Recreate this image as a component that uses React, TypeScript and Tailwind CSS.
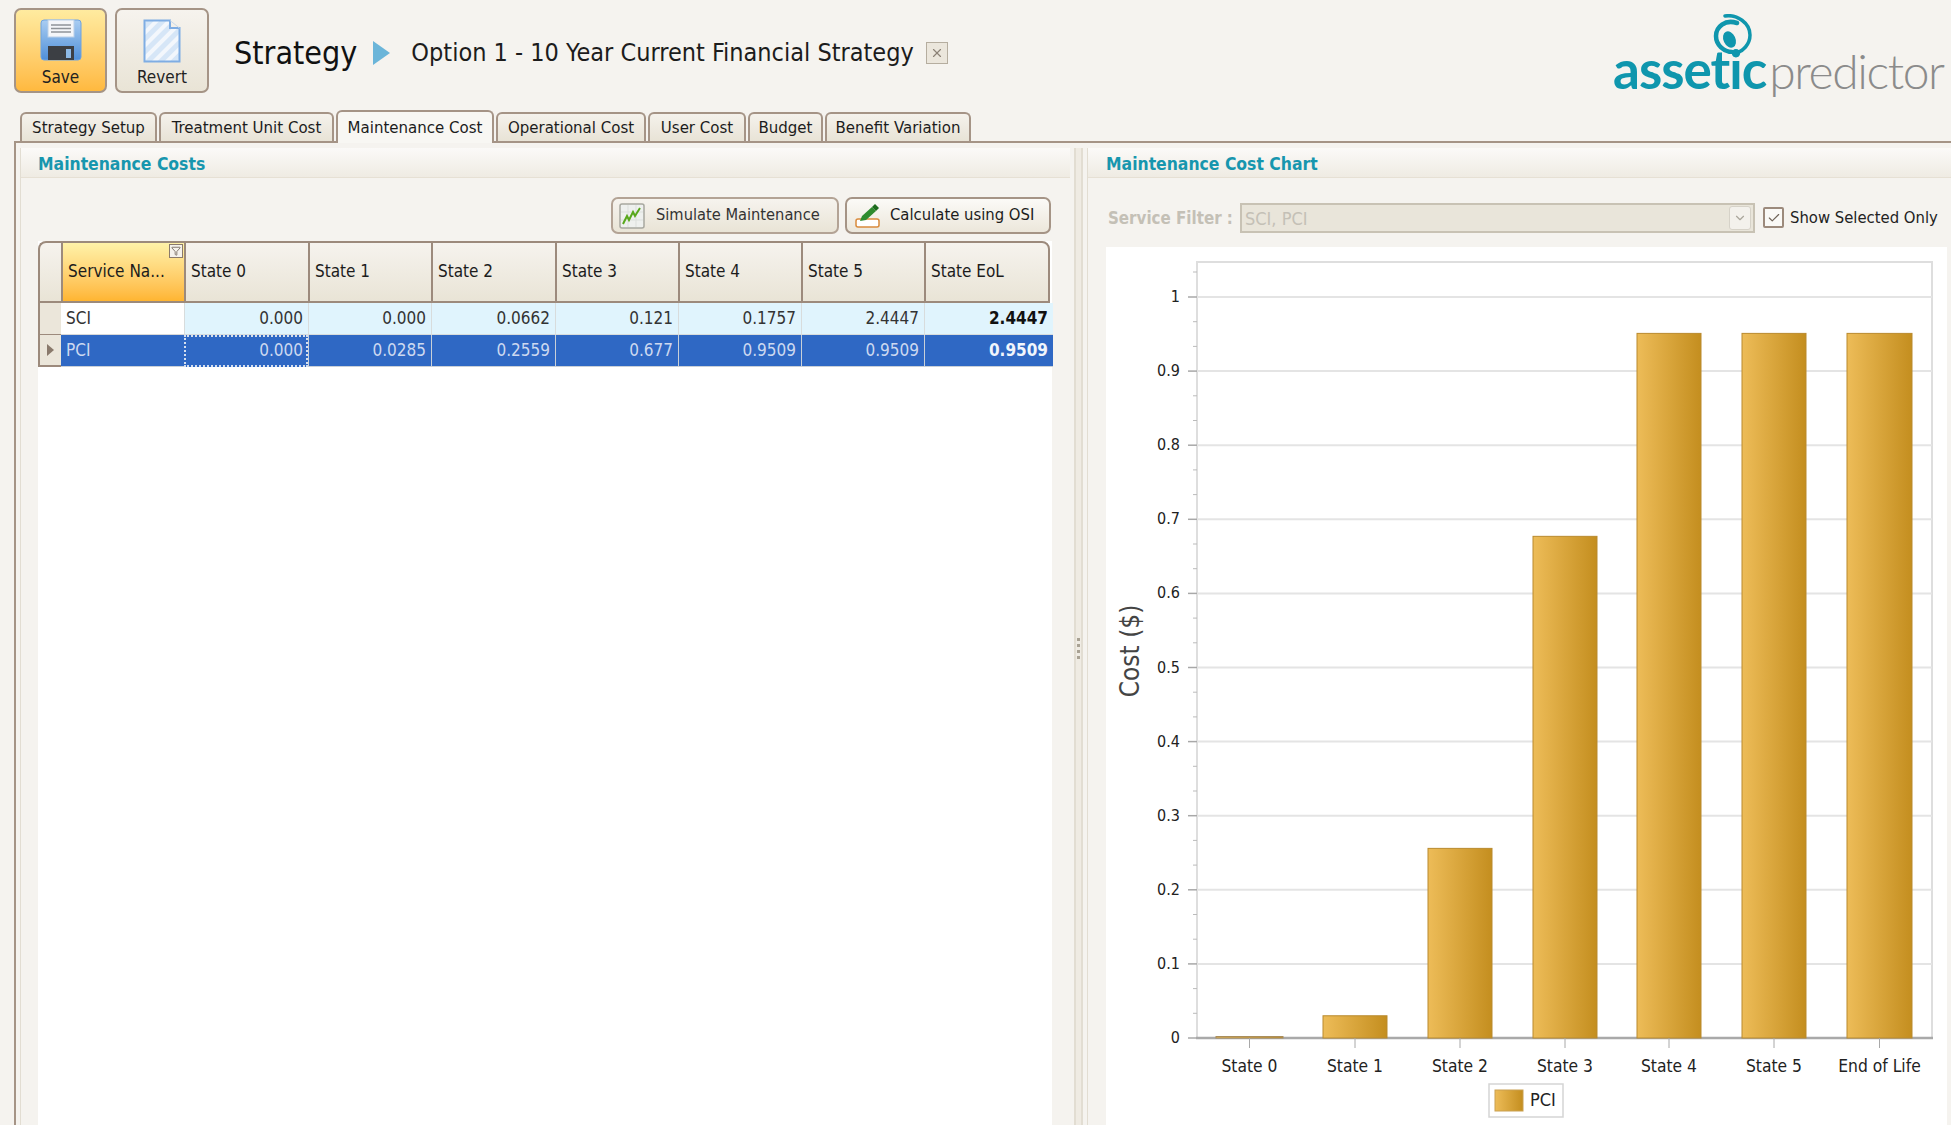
import React from "react";
import { ChevronDown, Check, X, Funnel } from "lucide-react";

const tabs = [
  { label: "Strategy Setup", width: "w-[137px]" },
  { label: "Treatment Unit Cost", width: "w-[175px]" },
  { label: "Maintenance Cost", width: "w-[158px]", active: true },
  { label: "Operational Cost", width: "w-[150px]" },
  { label: "User Cost", width: "w-[98px]" },
  { label: "Budget", width: "w-[75px]" },
  { label: "Benefit Variation", width: "w-[146px]" },
];

const columns = ["State 0", "State 1", "State 2", "State 3", "State 4", "State 5"];
const sci = ["0.000", "0.000", "0.0662", "0.121", "0.1757", "2.4447", "2.4447"];
const pci = ["0.000", "0.0285", "0.2559", "0.677", "0.9509", "0.9509", "0.9509"];

const bars = [
  { label: "State 0", x: 1216, w: 67, value: 0.002 },
  { label: "State 1", x: 1323, w: 64, value: 0.03 },
  { label: "State 2", x: 1428, w: 64, value: 0.2559 },
  { label: "State 3", x: 1533, w: 64, value: 0.677 },
  { label: "State 4", x: 1637, w: 64, value: 0.9509 },
  { label: "State 5", x: 1742, w: 64, value: 0.9509 },
  { label: "End of Life", x: 1847, w: 65, value: 0.9509 },
];

const yZero = 1038;
const yUnit = 741;
const yLabels = [0, 0.1, 0.2, 0.3, 0.4, 0.5, 0.6, 0.7, 0.8, 0.9, 1];

const SaveIcon = () => (
  <svg width="42" height="42" viewBox="0 0 42 42">
    <defs>
      <linearGradient id="disk" x1="0" y1="0" x2="0" y2="1">
        <stop offset="0" stopColor="#a9cdf2" />
        <stop offset="1" stopColor="#4f8fd8" />
      </linearGradient>
    </defs>
    <rect x="1" y="1" width="40" height="40" rx="3" fill="url(#disk)" stroke="#6fa3e0" />
    <rect x="8" y="1" width="26" height="17" fill="#f4f6f9" stroke="#b9cfe8" />
    <path d="M11 6h20M11 9.500h20M11 13h20" stroke="#8f9499" strokeWidth="1.500" />
    <rect x="8" y="27" width="26" height="14" fill="#3c3f44" />
    <rect x="26" y="30" width="5" height="9" fill="#8db9e6" />
  </svg>
);

const RevertIcon = () => (
  <svg width="38" height="44" viewBox="0 0 38 44">
    <defs>
      <pattern id="stripes" width="9" height="9" patternUnits="userSpaceOnUse" patternTransform="rotate(45)">
        <rect width="9" height="9" fill="#d6e6f7" />
        <rect width="4" height="9" fill="#f3f7fc" />
      </pattern>
    </defs>
    <path d="M1.500 1.500H27V9h9.500v33.500H1.500z" fill="url(#stripes)" stroke="#7fade3" strokeWidth="2" />
    <path d="M27 1.500L36.500 9" stroke="#c9d9ea" strokeWidth="1" />
  </svg>
);

const SimulateIcon = () => (
  <svg width="26" height="26" viewBox="0 0 26 26">
    <rect x="1" y="1" width="24" height="24" rx="2" fill="#eef0ee" stroke="#a8a8a0" strokeWidth="1.500" />
    <path d="M2 9h22M2 17h22M9 2v22M17 2v22" stroke="#dcdfdc" />
    <path d="M4 21l4-8 2 4 4-8 2 4 5-8" fill="none" stroke="#58a81c" strokeWidth="2" />
  </svg>
);

const CalculateIcon = () => (
  <svg width="26" height="24" viewBox="0 0 26 24">
    <rect x="1" y="15" width="23" height="8" rx="2" fill="#fff" stroke="#d98a3c" strokeWidth="1.500" />
    <path d="M5 17l2-5L17 3l4 4-10 9z" fill="#2e8b2e" />
    <path d="M17 3l3-3 4 4-3 3z" fill="#1d6b1d" />
  </svg>
);

const LogoSwirl = () => (
  <svg width="40" height="40" viewBox="0 0 40 40" fill="none" stroke="#0f96ad" strokeLinecap="round">
    <ellipse cx="16.500" cy="25.500" rx="6" ry="8.500" transform="rotate(-25 16.500 25.500)" fill="#0f96ad" stroke="none" />
    <path d="M24 9C12 5 3 13 3 22c0 9 8 16 16 16" strokeWidth="4.500" />
    <path d="M12 2c12-2 25 7 25 19 0 9-7 17-15 18" strokeWidth="3.500" />
  </svg>
);

const PanelHeader = ({ title, padding }: { title: string; padding: string }) => (
  <div className={`h-[30px] shrink-0 flex items-center pt-[3px] ${padding} bg-gradient-to-b from-[#fbfaf8] to-[#efebe3] border-b border-[#e6e0d4] text-[17.4px] font-bold text-[#1796ae]`}>
    {title}
  </div>
);

const CostChart = () => (
  <svg viewBox="1106 247 841 878" className="w-full h-full text-[16px]">
    <defs>
      <linearGradient id="bar" x1="0" y1="0" x2="1" y2="0">
        <stop offset="0" stopColor="#edbc58" />
        <stop offset="1" stopColor="#c48e1f" />
      </linearGradient>
    </defs>
    <rect x="1197" y="262" width="735" height="776" fill="#fff" stroke="#dedede" strokeWidth="2" />
    {yLabels.map((v) => {
      const y = yZero - v * yUnit;
      return (
        <g key={v}>
          {v > 0 && <line x1="1197" x2="1932" y1={y} y2={y} stroke="#e4e4e4" strokeWidth="2" />}
          <line x1="1188" x2="1197" y1={y} y2={y} stroke="#a8a8a8" strokeWidth="1.500" />
          <text x="1180" y={y + 5} textAnchor="end" fill="#222">
            {v}
          </text>
          {v < 1 && [1, 2].map((i) => (
            <line key={i} x1="1193" x2="1197" y1={y - (i * yUnit) / 30} y2={y - (i * yUnit) / 30} stroke="#bbb" />
          ))}
        </g>
      );
    })}
    <line x1="1193" x2="1197" y1="272" y2="272" stroke="#bbb" />
    <line x1="1196" x2="1933" y1={yZero} y2={yZero} stroke="#a9a9a9" strokeWidth="2.500" />
    {bars.map((b) => {
      const h = b.value * yUnit;
      return (
        <g key={b.label}>
          <rect x={b.x} y={yZero - h} width={b.w} height={h} fill="url(#bar)" stroke={b.value < 0.01 ? "#a98d5c" : "#b98a2e"} />
          <line x1={b.x + b.w / 2} x2={b.x + b.w / 2} y1={yZero} y2={yZero + 10} stroke="#a8a8a8" />
          <text x={b.x + b.w / 2} y="1072" textAnchor="middle" fill="#222" className="text-[17.3px]">
            {b.label}
          </text>
        </g>
      );
    })}
    <text transform="translate(1139 651) rotate(-90)" textAnchor="middle" fill="#444" className="text-[26px]">
      Cost ($)
    </text>
    <rect x="1489" y="1084" width="74" height="33" fill="#fff" stroke="#d5d5d5" strokeWidth="1.500" />
    <rect x="1495" y="1090" width="28" height="21" fill="url(#bar)" stroke="#c9a050" />
    <text x="1530" y="1106" fill="#222" className="text-[18px]">
      PCI
    </text>
  </svg>
);

export default function App() {
  return (
    <div className="w-[1951px] h-[1125px] overflow-hidden flex flex-col bg-[#f5f3ef] font-['DejaVu_Sans_Condensed','DejaVu_Sans',sans-serif] text-[16px] text-[#222]">
      {/* toolbar */}
      <div className="h-[105px] shrink-0 flex items-start pl-[14px] pt-[8px]">
        <button className="w-[93px] h-[85px] flex flex-col items-center justify-end pb-[1px] rounded-[7px] border-2 border-[#a59486] bg-gradient-to-b from-[#ffeb9f] to-[#ffb93e] text-[17px]">
          <SaveIcon />
          <span className="mt-[4px]">Save</span>
        </button>
        <button className="ml-[8px] w-[94px] h-[85px] flex flex-col items-center justify-end pb-[1px] rounded-[7px] border-2 border-[#a59486] bg-gradient-to-b from-[#f6f3ee] to-[#e9e4d6] text-[17px]">
          <RevertIcon />
          <span className="mt-[2px]">Revert</span>
        </button>
        <div className="ml-[25px] mt-[2px] h-[85px] flex items-center">
          <span className="text-[32px] text-[#111]">Strategy</span>
          <svg width="18" height="24" viewBox="0 0 18 24" className="ml-[16px]">
            <path d="M0 0l17 12L0 24z" fill="#6bb5d9" />
          </svg>
          <span className="ml-[20px] text-[25px] text-[#1c1c1c]">Option 1 - 10 Year Current Financial Strategy</span>
          <span className="ml-[12px] w-[22px] h-[22px] flex items-center justify-center border border-[#b5ad9f] bg-[#ebe6dc] text-[#8c8276]">
            <X size={14} />
          </span>
        </div>
        <div className="ml-auto mr-[4px] relative h-[95px] w-[334px]">
          <div className="absolute left-[100px] top-[6px]">
            <LogoSwirl />
          </div>
          <div className="absolute left-0 bottom-0 flex items-baseline font-['Lato',sans-serif] leading-[64px]">
            <span className="text-[53px] font-bold text-[#0f96ad] tracking-[-1px]">assetic</span>
            <span className="ml-[3px] text-[48px] font-light text-[#8b8b8b] tracking-[-1.400px]">predictor</span>
          </div>
        </div>
      </div>

      {/* tabs */}
      <div className="h-[36px] shrink-0 flex items-end pl-[20px] gap-[2px] relative z-10 text-[16.700px]">
        {tabs.map((t) => (
          <div
            key={t.label}
            className={
              t.active
                ? `${t.width} h-[33px] -mb-[2px] pt-[1px] flex items-center justify-center rounded-t-[6px] border-2 border-b-0 border-[#a59486] bg-[#f8f7f3] text-[#1c1c1c]`
                : `${t.width} h-[29px] pt-[1px] flex items-center justify-center rounded-t-[6px] border-2 border-b-0 border-[#a59486] bg-gradient-to-b from-[#f5f2ec] to-[#e8e3d6] text-[#1c1c1c]`
            }
          >
            {t.label}
          </div>
        ))}
      </div>

      {/* panels */}
      <div className="flex-1 min-h-0 ml-[14px] flex border-l-2 border-t-2 border-[#a59486] pl-[4px] pt-[5px]">
        <div className="w-[1050px] shrink-0 flex flex-col border-l border-[#e2ddd2]">
          <PanelHeader title="Maintenance Costs" padding="pl-[17px]" />
          <div className="flex justify-end gap-[6px] pt-[19px] pr-[19px] text-[16.3px]">
            <button className="w-[228px] h-[37px] flex items-center rounded-[7px] border-2 border-[#b3a395] bg-gradient-to-b from-[#f6f3ee] to-[#e9e4d6] pl-[6px] text-[#333]">
              <SimulateIcon />
              <span className="ml-[11px]">Simulate Maintenance</span>
            </button>
            <button className="w-[206px] h-[37px] flex items-center rounded-[7px] border-2 border-[#a59486] bg-gradient-to-b from-[#fbfaf7] to-[#ece7db] pl-[8px] text-[#1c1c1c]">
              <CalculateIcon />
              <span className="ml-[9px] text-[16.5px]">Calculate using OSI</span>
            </button>
          </div>
          <div className="ml-[17px] mr-[18px] mt-[7px] flex-1 min-h-0 bg-white">
            <div className="grid grid-cols-[23px_123px_124px_123px_124px_123px_123px_123px_129px] grid-rows-[62px_32px_32px] text-[17px]">
              <div className="rounded-tl-[8px] border-2 border-r-0 border-[#9c8a7c] bg-gradient-to-b from-[#f6f3ee] to-[#e9e4d6]" />
              <div className="relative flex items-center pl-[5px] border-l-2 border-t-2 border-b-2 border-[#9c8a7c] bg-gradient-to-b from-[#fff2a8] to-[#ffb530] text-[#1c1c1c] whitespace-nowrap">
                Service Na...
                <span className="absolute right-[1px] top-[1px] w-[14px] h-[14px] flex items-center justify-center border border-[#8a7a6c] bg-[#f5f2ec] text-[#6f6358]">
                  <Funnel size={10} />
                </span>
              </div>
              {columns.map((c) => (
                <div key={c} className="flex items-center pl-[5px] border-l-2 border-t-2 border-b-2 border-[#9c8a7c] bg-gradient-to-b from-[#f6f3ee] to-[#e9e4d6] text-[#1c1c1c]">
                  {c}
                </div>
              ))}
              <div className="mr-[3px] flex items-center pl-[5px] rounded-tr-[8px] border-2 border-[#9c8a7c] bg-gradient-to-b from-[#f6f3ee] to-[#e9e4d6] text-[#1c1c1c]">
                State EoL
              </div>

              <div className="border-l-2 border-b border-[#9c8a7c] bg-[#ebe6da]" />
              <div className="flex items-center pl-[5px] bg-white border-b border-[#d8d8d8] text-[#333]">SCI</div>
              {sci.map((v, i) => (
                <div
                  key={i}
                  className={
                    i === 6
                      ? "flex items-center justify-end pr-[5px] bg-[#e0f4fd] border-b border-l border-[#d8dcdc] font-bold text-[#111]"
                      : "flex items-center justify-end pr-[5px] bg-[#e0f4fd] border-b border-l border-[#d8dcdc] text-[#333]"
                  }
                >
                  {v}
                </div>
              ))}

              <div className="flex items-center justify-center border-l-2 border-b-2 border-[#9c8a7c] bg-[#ebe6da]">
                <svg width="7" height="12" viewBox="0 0 7 12">
                  <path d="M0 0l7 6-7 6z" fill="#8a7a6c" />
                </svg>
              </div>
              <div className="flex items-center pl-[5px] bg-[#2f68c4] border-b border-[#c9d0d8] text-[#cdd9f0]">PCI</div>
              {pci.map((v, i) => (
                <div
                  key={i}
                  className={
                    i === 0
                      ? "flex items-center justify-end pr-[3px] bg-[#2f68c4] border-2 border-dotted border-[#d5dfef] text-[#cdd9f0]"
                      : i === 6
                        ? "flex items-center justify-end pr-[5px] bg-[#2f68c4] border-b border-l border-[#c9d0d8] font-bold text-[#f1f5fc]"
                        : "flex items-center justify-end pr-[5px] bg-[#2f68c4] border-b border-l border-[#c9d0d8] text-[#cdd9f0]"
                  }
                >
                  {v}
                </div>
              ))}
            </div>
          </div>
        </div>

        {/* splitter */}
        <div className="w-[17px] shrink-0 flex justify-center">
          <div className="relative w-[9px] h-full border-x-2 border-[#e2ddd2] bg-[#efebe3]">
            <div className="absolute left-[1px] top-[490px] flex flex-col gap-[3px]">
              <span className="w-[3px] h-[3px] bg-[#a9a294]" />
              <span className="w-[3px] h-[3px] bg-[#a9a294]" />
              <span className="w-[3px] h-[3px] bg-[#a9a294]" />
              <span className="w-[3px] h-[3px] bg-[#a9a294]" />
            </div>
          </div>
        </div>

        <div className="flex-1 min-w-0 flex flex-col border-l border-[#e2ddd2]">
          <PanelHeader title="Maintenance Cost Chart" padding="pl-[18px]" />
          <div className="h-[69px] shrink-0 flex items-start pt-[25px] pl-[20px]">
            <span className="w-[132px] leading-[30px] text-[16.8px] font-bold text-[#c4c0b6] whitespace-nowrap">Service Filter :</span>
            <div className="w-[515px] h-[30px] flex items-center justify-between border-2 border-[#c8c2b4] bg-[#e9e5da] pl-[3px] pr-[2px] text-[18px] text-[#c4c0b6]">
              SCI, PCI
              <span className="w-[22px] h-[24px] flex items-center justify-center rounded-[3px] border border-[#d6d2c8] bg-[#f3f1ec] text-[#a9a59b]">
                <ChevronDown size={14} />
              </span>
            </div>
            <span className="ml-[8px] mt-[4px] w-[21px] h-[21px] flex items-center justify-center rounded-[2px] border-2 border-[#9c8a7c] bg-[#faf9f6] text-[#6f6358]">
              <Check size={14} />
            </span>
            <span className="ml-[6px] leading-[30px] text-[16.5px] text-[#222] whitespace-nowrap">Show Selected Only</span>
          </div>
          <div className="flex-1 min-h-0 ml-[18px] mr-[4px] bg-white">
            <CostChart />
          </div>
        </div>
      </div>
    </div>
  );
}
